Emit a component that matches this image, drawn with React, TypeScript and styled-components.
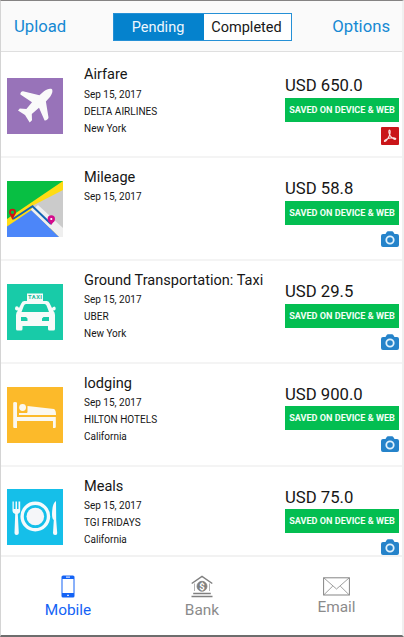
import React from "react";
import styled, { createGlobalStyle } from "styled-components";

const GlobalStyle = createGlobalStyle`
  *, *::before, *::after { box-sizing: border-box; }
  body { margin: 0; background: #fff; font-family: Roboto, "Liberation Sans", sans-serif; }
`;

const Screen = styled.main`
  width: 404px;
  height: 637px;
  display: flex;
  flex-direction: column;
  overflow: hidden;
  background: #fff;
  border-style: solid;
  border-width: 1px 2px 2px 1px;
  border-color: #858383 #f0f0f0 #6d6d6d #d4d4d4;
`;

const Header = styled.header`
  flex: none;
  height: 51px;
  display: grid;
  grid-template-columns: 112px 179px 1fr;
  align-items: center;
  background: #fafafa;
  border-bottom: 1px solid #dfdfdf;
`;

const HeaderLink = styled.button<{ $end?: boolean }>`
  border: 0;
  background: none;
  padding: ${(p) => (p.$end ? "1px 12px 0 0" : "1px 0 0 13px")};
  text-align: ${(p) => (p.$end ? "right" : "left")};
  font: 400 16.7px/20px Roboto, sans-serif;
  color: #1689d3;
`;

const Segments = styled.div`
  display: grid;
  grid-template-columns: 90px 1fr;
  width: 179px;
  height: 28px;
  margin-top: 1px;
  border: 1px solid #2590d6;
  background: #fff;
`;

const Segment = styled.button<{ $active?: boolean }>`
  border: 0;
  padding: 2px 2px 0 0;
  font: 400 14.5px/20px Roboto, sans-serif;
  background: ${(p) => (p.$active ? "#0582cd" : "transparent")};
  color: ${(p) => (p.$active ? "#eef7fd" : "#181818")};
`;

const List = styled.section`
  flex: none;
  height: 505px;
  padding-top: 3px;
  overflow: hidden;
  border-bottom: 2px solid #f2f2f2;
`;

const Row = styled.article`
  height: 102.92px;
  display: grid;
  grid-template-columns: 77px 201px 114px;
  padding-left: 6px;
  border-bottom: 2px solid #f4f4f4;
`;

const Thumb = styled.svg`
  display: block;
  width: 56px;
  height: 56px;
  margin-top: 22.8px;
`;

const Details = styled.div`
  padding-top: 11.2px;
  color: #161616;
`;

const Title = styled.h2`
  margin: 0 0 1.4px;
  font-size: 14.55px;
  line-height: 18px;
  font-weight: 400;
  white-space: nowrap;
`;

const Line = styled.p`
  margin: 0;
  font-size: 10px;
  line-height: 17px;
  white-space: nowrap;
`;

const Status = styled.div`
  display: flex;
  flex-direction: column;
  padding-top: 20.2px;
`;

const Amount = styled.div`
  font-size: 16.7px;
  line-height: 21px;
  height: 22.5px;
  white-space: nowrap;
  color: #161616;
`;

const Badge = styled.div`
  height: 24px;
  flex: none;
  text-align: center;
  background: #03be51;
  color: #f2fff6;
  font-size: 9.1px;
  line-height: 24px;
  font-weight: 700;
  white-space: nowrap;
`;

const Attachment = styled.svg`
  display: block;
  flex: none;
  width: 18px;
  height: 18px;
  margin-top: 5px;
  align-self: flex-end;
`;

const TabBar = styled.nav`
  flex: 1;
  display: grid;
  grid-template-columns: 134px 134px 1fr;
`;

const Tab = styled.button<{ $active?: boolean; $raised?: boolean }>`
  border: 0;
  background: none;
  padding: ${(p) => (p.$raised ? "20px 0 0 2px" : "18px 0 0")};
  display: flex;
  flex-direction: column;
  align-items: center;
  gap: ${(p) => (p.$raised ? "2px" : "3px")};
  font: 400 15.4px/19px Roboto, sans-serif;
  color: ${(p) => (p.$active ? "#1463f5" : "#8b8b8b")};
`;

const TabIcon = styled.svg`
  display: block;
`;

function PlaneIcon() {
  return (
    <Thumb viewBox="0 0 56 56">
      <rect width="56" height="56" fill="#9873b9" />
      <path
        fill="#fafafa"
        d="M45 11.2C43 10.2 39.6 11.2 37 13.3L32.4 17.3 16 13.2C14.7 13 13 14.8 13.4 16.4L25 24.2 19.4 31 12.8 30.4 11 32.6 18 37 22.7 44.6 25 42.3 24.8 36 32 29.8 37.6 42.5C39 43 41.5 40.8 41.5 39.4L38.9 23.4 42.5 19.5C45 16.6 46.1 13 45 11.2Z"
      />
    </Thumb>
  );
}

function MapIcon() {
  return (
    <Thumb viewBox="0 0 56 56">
      <rect width="56" height="56" fill="#ffdc13" />
      <path d="M0 0H56L0 38Z" fill="#08bf43" />
      <path d="M56 9V56H52L25 25Z" fill="#cbcbcb" />
      <path d="M31 24L56 47V56H52L25 29Z" fill="#efefef" />
      <path d="M0 45.5L24.5 29 52 56H0Z" fill="#4c86f9" />
      <path d="M25.5 27L45 45.5" fill="none" stroke="#efefef" strokeWidth="5" />
      <path d="M6 38L25.5 25.2 44 43" fill="none" stroke="#1264b5" strokeWidth="2" />
      <path d="M5.5 39L3 33.5H8Z" fill="#cf1515" />
      <circle cx="5.5" cy="31.3" r="2.6" fill="none" stroke="#cf1515" strokeWidth="1.7" />
      <path d="M44.3 44L41.3 39.5H47.3Z" fill="#d40b8c" />
      <circle cx="44.3" cy="38" r="2.4" fill="#fff" stroke="#d40b8c" strokeWidth="2.6" />
    </Thumb>
  );
}

function TaxiIcon() {
  return (
    <Thumb viewBox="0 0 56 56">
      <rect width="56" height="56" fill="#18cba8" />
      <path
        fill="#f7fbf9"
        fillRule="evenodd"
        d="M20 9.5H36V17H39.5Q41.8 17 42.5 19L45 24Q46 22.5 47.5 22.5Q49 23 48.7 25Q48.5 26.6 46 26.5Q48 28 48 31V45Q48 46.5 46.5 46.5H42.5Q41 46.5 41 45V42H15.5V45Q15.5 46.5 14 46.5H10.5Q9 46.5 9 45V31Q9 28 11 26.5Q8 26.5 8 24.5Q8 22.3 9.8 22.3Q11.3 22.5 12 24L14.5 19Q15.2 17 17.5 17H20ZM19 20Q17.5 20 17 21.5L14.5 28H42L39.5 21.5Q39 20 37.5 20ZM14 33V37H20.5V34.5L19 33ZM36.5 33L35 34.5V37H42V33Z"
      />
      <text x="28" y="15.3" textAnchor="middle" textLength="14" fontFamily="Roboto" fontSize="5.8" fontWeight="700" fill="#18b99a">
        TAXI
      </text>
    </Thumb>
  );
}

function BedIcon() {
  return (
    <Thumb viewBox="0 0 56 56">
      <rect width="56" height="56" fill="#fcba2a" />
      <g fill="#fbf8ef">
        <path d="M6.2 16Q6.2 15 8 15Q10 15 10 16V30H48.8V40Q48.8 41 47.5 41H46V34H10V41H7.5Q6.2 41 6.2 40Z" />
        <circle cx="15.6" cy="20.5" r="3.4" />
        <path d="M20.5 19L47 22Q49 23 49 28H12V25.5H20.5Z" />
      </g>
      <path d="M10 29H49M12 25.2H20" stroke="#fcba2a" strokeWidth="1.4" />
    </Thumb>
  );
}

function MealIcon() {
  return (
    <Thumb viewBox="0 0 56 56">
      <rect width="56" height="56" fill="#15bfe9" />
      <circle cx="28.3" cy="27.5" r="13.2" fill="none" stroke="#f5fafc" strokeWidth="3.4" />
      <circle cx="28.3" cy="27.5" r="8.8" fill="#f5f6f9" />
      <path
        fill="#f5fafc"
        d="M5.5 12.5H6.8V20H8.5V12.5H10V20H11.5V12.5H13.2V22Q13.2 24 10.8 25L11.8 44Q11.8 46 9.6 46Q7.5 46 7.5 44L8.2 25Q5.5 24 5.5 22Z"
      />
      <path fill="#f5fafc" d="M49 12Q45.3 14 45 25Q45 30 46.8 31L46 44Q46 46 48 46Q50.3 46 50.2 44L49.2 31Z" />
    </Thumb>
  );
}

function PdfIcon() {
  return (
    <Attachment viewBox="0 0 18 18">
      <rect width="18" height="18" rx="1" fill="#ca1519" />
      <path
        d="M8.2 3.2C9.6 2.5 9.3 6.3 8.5 8.3C7.5 11 5 14.7 3.7 14.5C2.5 14 5.2 11.8 8 11.2C11 10.5 15 10.8 14.8 12C14.5 13.3 10.8 11.2 9.2 8.7C8.1 7 7.3 4 8.2 3.2Z"
        fill="none"
        stroke="#fbe6e6"
        strokeWidth="1.1"
      />
    </Attachment>
  );
}

function CameraIcon() {
  return (
    <Attachment viewBox="0 0 18 18">
      <path
        fill="#2583ca"
        d="M2 4H4.5L5.7 1.9Q6 1.2 7 1.2H11Q12 1.2 12.3 1.9L13.5 4H16Q18 4 18 6V15Q18 17 16 17H2Q0 17 0 15V6Q0 4 2 4Z"
      />
      <circle cx="9" cy="10" r="3.7" fill="none" stroke="#e0f1fc" strokeWidth="1.8" />
    </Attachment>
  );
}

function PhoneIcon() {
  return (
    <TabIcon width="14" height="23" viewBox="0 0 14 23">
      <rect x="0.5" y="0.5" width="13" height="22" rx="1.6" fill="#1463f5" />
      <rect x="1.5" y="4" width="11" height="14" fill="#fff" />
      <path d="M5 2.2H9M6 20.4H8" stroke="#d3e2ff" strokeWidth="1.2" />
    </TabIcon>
  );
}

function BankIcon() {
  return (
    <TabIcon width="22" height="23" viewBox="0 0 22 23" fill="none" stroke="#808080">
      <path d="M0.7 8.5L11 1.3 21.3 8.5" strokeWidth="1.5" />
      <path d="M3.5 8.5V16M18.5 8.5V16" strokeWidth="0.6" />
      <circle cx="11" cy="11.3" r="5" fill="#808080" strokeWidth="0.8" />
      <path d="M2.2 18.5H19.8M0.5 21.5H21.5" strokeWidth="1.4" />
      <text x="11" y="14.8" textAnchor="middle" fontFamily="Roboto" fontSize="9.5" fontWeight="700" fill="#fff" stroke="none">
        $
      </text>
    </TabIcon>
  );
}

function EnvelopeIcon() {
  return (
    <TabIcon width="27" height="19" viewBox="0 0 27 19" fill="none" stroke="#858585">
      <rect x="0.6" y="0.8" width="25.8" height="17.2" strokeWidth="1" />
      <path d="M1 1L13.5 12 26 1M1 17.7L9.8 9M26 17.7L17.2 9" strokeWidth="0.8" />
    </TabIcon>
  );
}

const expenses = [
  { title: "Airfare", lines: ["Sep 15, 2017", "DELTA AIRLINES", "New York"], amount: "650.0", Icon: PlaneIcon, File: PdfIcon },
  { title: "Mileage", lines: ["Sep 15, 2017"], amount: "58.8", Icon: MapIcon, File: CameraIcon },
  { title: "Ground Transportation: Taxi", lines: ["Sep 15, 2017", "UBER", "New York"], amount: "29.5", Icon: TaxiIcon, File: CameraIcon },
  { title: "lodging", lines: ["Sep 15, 2017", "HILTON HOTELS", "California"], amount: "900.0", Icon: BedIcon, File: CameraIcon },
  { title: "Meals", lines: ["Sep 15, 2017", "TGI FRIDAYS", "California"], amount: "75.0", Icon: MealIcon, File: CameraIcon },
];

export default function App() {
  return (
    <>
      <GlobalStyle />
      <Screen>
        <Header>
          <HeaderLink>Upload</HeaderLink>
          <Segments>
            <Segment $active>Pending</Segment>
            <Segment>Completed</Segment>
          </Segments>
          <HeaderLink $end>Options</HeaderLink>
        </Header>
        <List>
          {expenses.map(({ title, lines, amount, Icon, File }) => (
            <Row key={title}>
              <Icon />
              <Details>
                <Title>{title}</Title>
                {lines.map((line) => (
                  <Line key={line}>{line}</Line>
                ))}
              </Details>
              <Status>
                <Amount>USD {amount}</Amount>
                <Badge>SAVED ON DEVICE &amp; WEB</Badge>
                <File />
              </Status>
            </Row>
          ))}
        </List>
        <TabBar>
          <Tab $active>
            <PhoneIcon />
            Mobile
          </Tab>
          <Tab>
            <BankIcon />
            Bank
          </Tab>
          <Tab $raised>
            <EnvelopeIcon />
            Email
          </Tab>
        </TabBar>
      </Screen>
    </>
  );
}
